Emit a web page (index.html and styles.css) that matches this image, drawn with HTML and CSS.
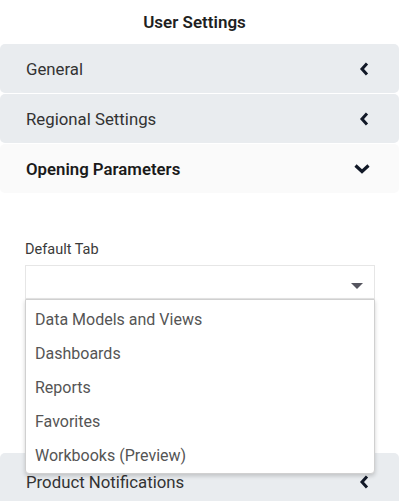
FILE: index.html
```html
<!DOCTYPE html>
<html lang="en">
<head>
  <meta charset="UTF-8" />
  <meta name="viewport" content="width=device-width, initial-scale=1" />
  <title>User Settings</title>
  <link rel="stylesheet" href="styles.css">
</head>
<body>
  <h1 class="title">User Settings</h1>

  <div class="panel">
    <span>General</span>
    <svg class="chev" width="10" height="14" viewBox="0 0 10 14"><path d="M8 1.5 L3 7 L8 12.5" fill="none" stroke="#111827" stroke-width="3"/></svg>
  </div>
  <div class="panel">
    <span>Regional Settings</span>
    <svg class="chev" width="10" height="14" viewBox="0 0 10 14"><path d="M8 1.5 L3 7 L8 12.5" fill="none" stroke="#111827" stroke-width="3"/></svg>
  </div>
  <div class="panel open">
    <span>Opening Parameters</span>
    <svg class="chev-down" width="16" height="10" viewBox="0 0 16 10"><path d="M1.5 1.5 L8 7.5 L14.5 1.5" fill="none" stroke="#111827" stroke-width="3.2"/></svg>
  </div>

  <div class="content">
    <label class="field-label">Default Tab</label>
    <div class="select">
      <span class="caret"></span>
      <ul class="options">
        <li>Data Models and Views</li>
        <li>Dashboards</li>
        <li>Reports</li>
        <li>Favorites</li>
        <li>Workbooks (Preview)</li>
      </ul>
    </div>
  </div>

  <div class="panel last">
    <span>Product Notifications</span>
    <svg class="chev" width="10" height="14" viewBox="0 0 10 14"><path d="M8 1.5 L3 7 L8 12.5" fill="none" stroke="#111827" stroke-width="3"/></svg>
  </div>
</body>
</html>
```

FILE: styles.css
```css
body {
  font-family: Roboto, "Liberation Sans", sans-serif;
  background: #fff;
  margin: 0;
  padding: 0;
  color: #333;
  overflow: hidden;
}

.title {
  margin: 0;
  height: 44px;
  line-height: 44px;
  padding-right: 10px;
  text-align: center;
  font-size: 17px;
  font-weight: 600;
  color: #1f1f1f;
}

.panel {
  display: flex;
  align-items: center;
  justify-content: space-between;
  height: 49px;
  margin-bottom: 1px;
  padding: 0 30px 0 26px;
  background: #e9ecef;
  border-radius: 5px;
  font-size: 16.8px;
  color: #333;
}

.panel.open {
  background: #fafafa;
  font-weight: 600;
  color: #1a1a1a;
}

.panel.last {
  padding-top: 4px;
}

.chev-down {
  margin-right: -1px;
}

.content {
  padding: 47px 24px 0 25px;
  height: 259px;
  box-sizing: border-box;
}

.field-label {
  display: block;
  font-size: 14.5px;
  line-height: 17px;
  color: #3a3a3a;
  margin-bottom: 7px;
}

.select {
  position: relative;
  height: 34px;
  border: 1px solid #e6e6e6;
  box-sizing: border-box;
}

.caret {
  position: absolute;
  right: 11px;
  top: 17px;
  width: 0;
  height: 0;
  border-left: 6px solid transparent;
  border-right: 6px solid transparent;
  border-top: 6px solid #55555f;
}

.options {
  position: absolute;
  left: -1px;
  right: -1px;
  top: 33px;
  margin: 0;
  padding: 3px 0 0;
  list-style: none;
  background: #fff;
  border: 1px solid #d0d0d0;
  border-radius: 0 0 4px 4px;
  box-shadow: 0 2px 4px rgba(0, 0, 0, 0.18);
  z-index: 2;
}

.options li {
  height: 34px;
  line-height: 34px;
  padding: 0 9px;
  font-size: 16px;
  color: #555;
}
```
